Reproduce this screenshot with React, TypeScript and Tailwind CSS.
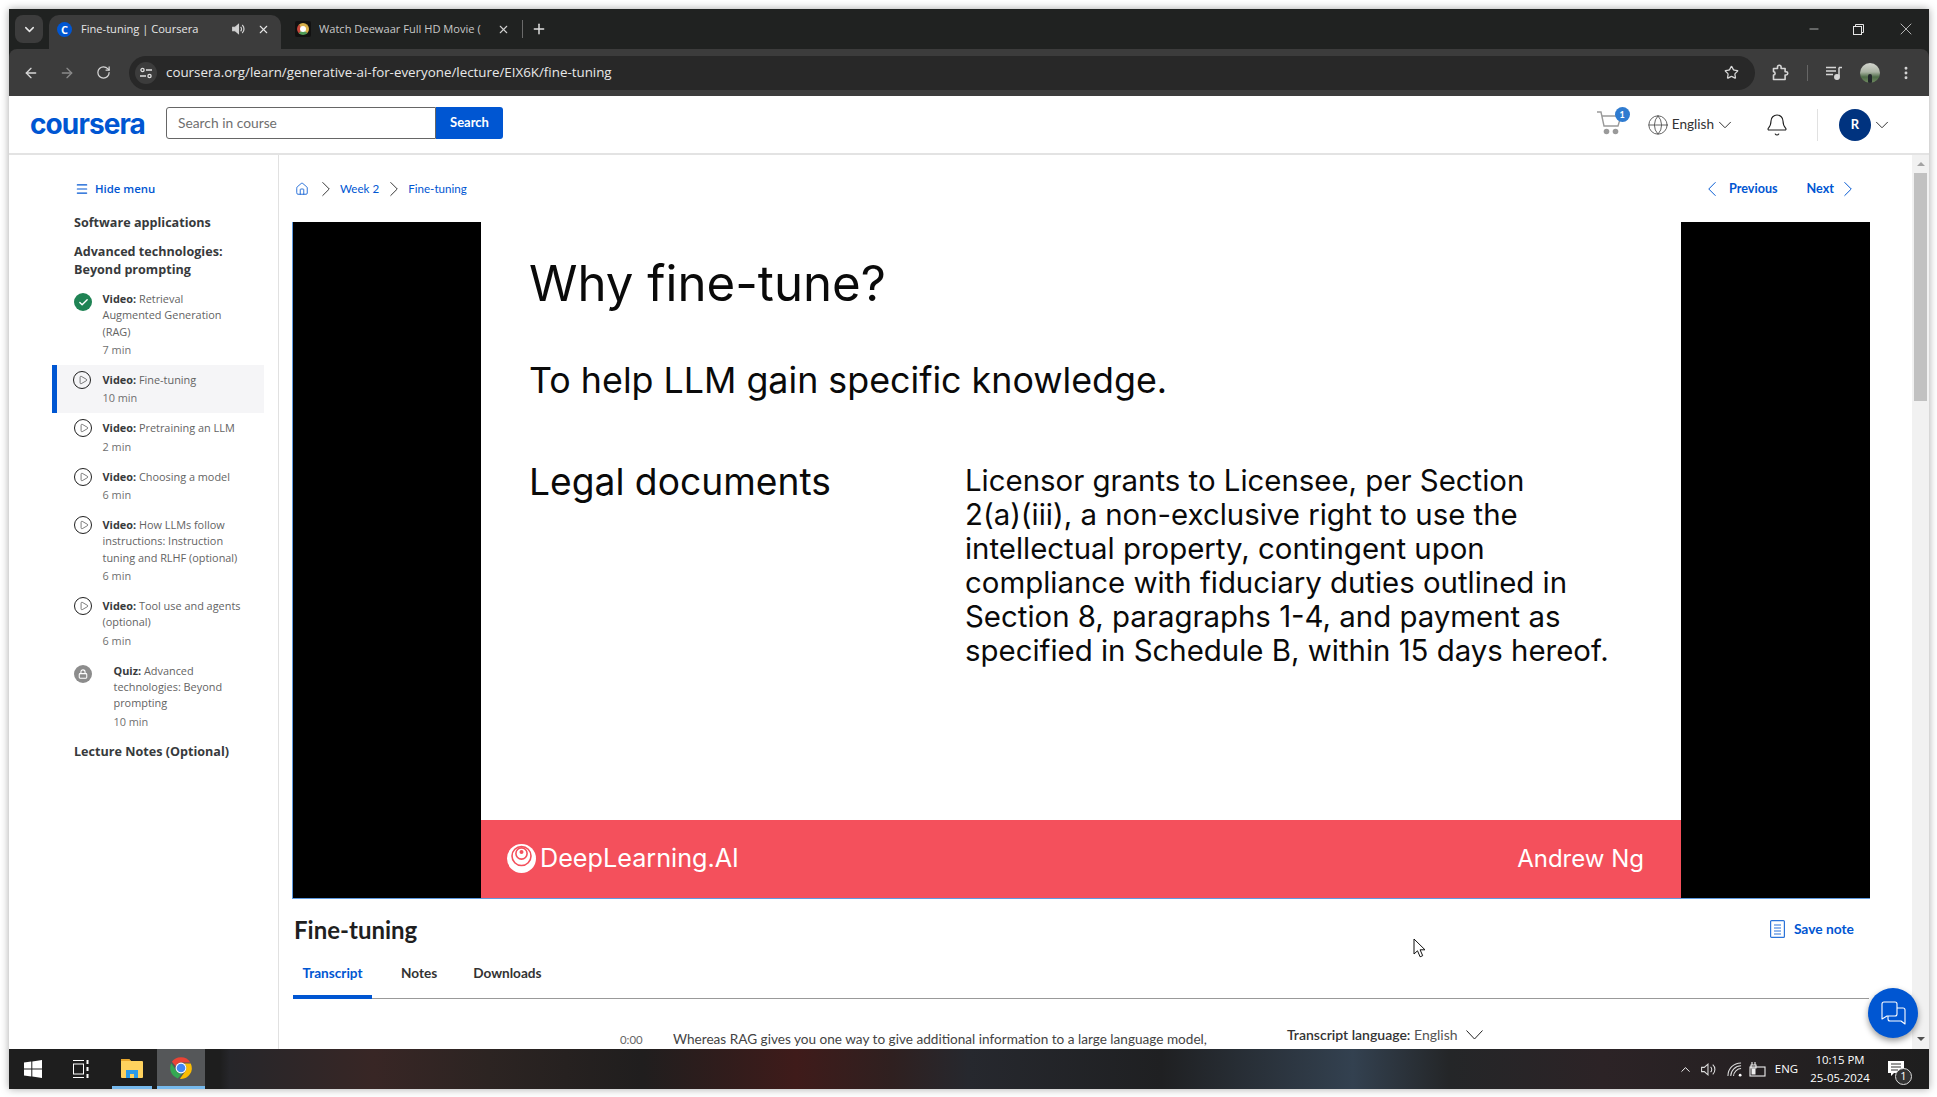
import React from "react";
import {
  ArrowLeft, ArrowRight, RotateCw, Star, X, Plus, ChevronDown, ChevronUp, ChevronLeft, ChevronRight,
  Menu, Globe, Bell, Home, EllipsisVertical, Minus, Check, Lock, Play,
} from "lucide-react";

const open = "font-['Open_Sans',sans-serif]";
const source = "font-['Lato',sans-serif]";
const chrome = "font-['Open_Sans',sans-serif]";

type Item = { kind: string; title: string; mins: string; icon: "done" | "play" | "lock"; active?: boolean };
const items: Item[] = [
  { kind: "Video:", title: " Retrieval Augmented Generation (RAG)", mins: "7 min", icon: "done" },
  { kind: "Video:", title: " Fine-tuning", mins: "10 min", icon: "play", active: true },
  { kind: "Video:", title: " Pretraining an LLM", mins: "2 min", icon: "play" },
  { kind: "Video:", title: " Choosing a model", mins: "6 min", icon: "play" },
  { kind: "Video:", title: " How LLMs follow instructions: Instruction tuning and RLHF (optional)", mins: "6 min", icon: "play" },
  { kind: "Video:", title: " Tool use and agents (optional)", mins: "6 min", icon: "play" },
  { kind: "Quiz:", title: " Advanced technologies: Beyond prompting", mins: "10 min", icon: "lock" },
];

function PlayIcon() {
  return (
    <span className="w-[18px] h-[18px] rounded-full border border-[#1f1f1f] flex items-center justify-center shrink-0 -mt-[1px]">
      <Play size={10} strokeWidth={1.4} className="text-[#1f1f1f] ml-[1px]" />
    </span>
  );
}

function SideItem({ item }: { item: Item }) {
  return (
    <div
      className={`flex w-[212px] py-[7px] border-l-[5px] ${
        item.active ? "border-[#0056d2] bg-[#f5f5f7] pl-[16px]" : "border-transparent pl-[17px]"
      }`}
    >
      {item.icon === "done" && (
        <span className="w-[18px] h-[18px] rounded-full bg-[#1f8354] flex items-center justify-center shrink-0 mt-[2px]">
          <Check size={11} strokeWidth={3} className="text-white" />
        </span>
      )}
      {item.icon === "play" && <PlayIcon />}
      {item.icon === "lock" && (
        <span className="w-[18px] h-[18px] rounded-full bg-[#8c8c8c] flex items-center justify-center shrink-0 mt-[2px]">
          <Lock size={10} strokeWidth={2.6} className="text-white" />
        </span>
      )}
      <div className={`${item.icon === "lock" ? "ml-[21.5px] w-[130px]" : item.active ? "ml-[11.5px] w-[140px]" : "ml-[10.5px] w-[140px]"}`}>
        <p className="text-[10.9px] leading-[16.33px] text-[#636363]">
          <span className="font-bold text-[#373a3c]">{item.kind}</span>
          {item.title}
        </p>
        <p className="text-[10.9px] leading-[16px] mt-[2px] text-[#6f6f6f]">{item.mins}</p>
      </div>
    </div>
  );
}

function Sidebar() {
  return (
    <aside className={`${open} w-[270px] shrink-0 border-r border-[#e1e1e1] pl-[43px] pt-[24px]`}>
      <div className="flex items-center h-5 pl-[23px] text-[#0056d2] text-[11.4px] font-semibold">
        <Menu size={14} strokeWidth={2} className="mr-[6px]" />
        Hide menu
      </div>
      <h3 className="pl-[22px] mt-[15px] text-[12.6px] leading-[18px] font-bold text-[#373a3c]">Software applications</h3>
      <h3 className="pl-[22px] mt-[11px] text-[12.6px] leading-[18px] font-bold text-[#373a3c] w-[190px]">
        Advanced technologies: Beyond prompting
      </h3>
      <div className="mt-[5px]">
        {items.map((it) => (
          <SideItem key={it.title} item={it} />
        ))}
      </div>
      <h3 className="pl-[22px] mt-[6px] text-[12.6px] leading-[18px] font-bold text-[#373a3c]">Lecture Notes (Optional)</h3>
    </aside>
  );
}

function ChromeLogo({ size = 30 }: { size?: number }) {
  return (
    <svg width={size} height={size} viewBox="0 0 48 48">
      <path d="M24 4a20 20 0 0 1 17.3 10H24a10 10 0 0 0-9.5 6.9L7.2 12.5A20 20 0 0 1 24 4z" fill="#ea4335" />
      <path d="M6 15.2 15.3 29a10 10 0 0 0 11.4 4.6L18 43.2A20 20 0 0 1 6 15.2z" fill="#34a853" />
      <path d="M42 15.5H29.5a10 10 0 0 1 2.8 14L22 44a20 20 0 0 0 20-28.5z" fill="#fbbc04" />
      <circle cx="24" cy="24" r="10" fill="#fff" />
      <circle cx="24" cy="24" r="8" fill="#4285f4" />
    </svg>
  );
}

function TabStrip() {
  return (
    <div className={`${chrome} h-[40px] bg-[#202221] flex text-[#e6e6e6] text-[11.1px] shrink-0`}>
      <div className="ml-[6px] mt-[6px] w-[28px] h-[28px] rounded-lg bg-[#3c3c3c] flex items-center justify-center">
        <ChevronDown size={15} strokeWidth={2.4} />
      </div>
      <div className="ml-[6px] mt-[6px] w-[232px] h-[34px] rounded-t-[10px] bg-[#3c3c3c] flex items-center pl-[8px] pr-[11px] pb-[6px]">
        <span className="w-[15px] h-[15px] rounded-full bg-[#0056d2] text-white text-[11px] font-bold flex items-center justify-center leading-none">C</span>
        <span className="ml-[9px] flex-1 whitespace-nowrap">Fine-tuning | Coursera</span>
        <svg width="14" height="14" viewBox="0 0 16 16" className="mr-[12px]" fill="none" stroke="#d0d0d0" strokeWidth="1.4">
          <path d="M2 6v4h3l3.5 3V3L5 6H2z" fill="#d0d0d0" />
          <path d="M11 5.5a3.5 3.5 0 0 1 0 5M12.8 3.5a6 6 0 0 1 0 9" />
        </svg>
        <X size={13} strokeWidth={2} />
      </div>
      <div className="w-[241px] h-[34px] mt-[6px] flex items-center pl-[14px] pr-[12px] pb-[6px]">
        <span className="w-[16px] h-[16px] rounded-[2px] bg-[#111] flex items-center justify-center shrink-0">
          <span className="w-[12px] h-[12px] rounded-full border-[3px] border-[#d8b04a] border-l-[#c7473a] border-b-[#4f9a55] bg-white" />
        </span>
        <span className="ml-[8px] w-[162px] overflow-hidden whitespace-nowrap text-[#c8c8c8]">Watch Deewaar Full HD Movie (</span>
        <X size={13} strokeWidth={2} className="ml-auto text-[#d0d0d0]" />
      </div>
      <div className="w-px h-[18px] bg-[#6a6a6a] mt-[11px]" />
      <Plus size={16} strokeWidth={2.2} className="ml-[8px] mt-[12px] text-[#e0e0e0]" />
      <div className="flex-1" />
      <div className="flex items-center h-[40px] mr-[13px] gap-[32px]">
        <Minus size={14} strokeWidth={1.2} />
        <svg width="11" height="11" viewBox="0 0 11 11" fill="none" stroke="#e6e6e6" strokeWidth="1">
          <rect x="0.5" y="2.5" width="8" height="8" />
          <path d="M2.5 2.5v-2h8v8h-2" />
        </svg>
        <X size={20} strokeWidth={0.9} />
      </div>
    </div>
  );
}

function Toolbar() {
  return (
    <div className="h-[47px] bg-[#3c3c3c] rounded-t-[8px] flex items-center shrink-0 text-[#d6d6d6]">
      <ArrowLeft size={16} strokeWidth={2} className="ml-[14px]" />
      <ArrowRight size={16} strokeWidth={2} className="ml-[20px] text-[#8a8a8a]" />
      <RotateCw size={15} strokeWidth={2} className="ml-[21px]" />
      <div className="ml-[18px] w-[1626px] h-[34px] rounded-full bg-[#282828] flex items-center pl-[6px] pr-[16px]">
        <span className="w-[22px] h-[22px] rounded-full bg-[#3c3c3c] flex items-center justify-center">
          <svg width="14" height="14" viewBox="0 0 14 14" fill="none" stroke="#e0e0e0" strokeWidth="1.3">
            <circle cx="3.5" cy="4" r="1.6" />
            <path d="M7 4h6M1 10h6" />
            <circle cx="10.5" cy="10" r="1.6" />
          </svg>
        </span>
        <span className={`${chrome} ml-[9px] text-[13.35px] text-[#e8e8e8]`}>coursera.org/learn/generative-ai-for-everyone/lecture/EIX6K/fine-tuning</span>
        <Star size={15} strokeWidth={2} className="ml-auto text-[#d8d8d8]" />
      </div>
      <svg width="17" height="17" viewBox="0 0 17 17" className="ml-[17px]" fill="none" stroke="#d6d6d6" strokeWidth="1.6">
        <path d="M1.5 4.5h4V3a1.8 1.8 0 0 1 3.6 0v1.5h4v3.2h1a1.6 1.6 0 0 1 0 3.3h-1v4.5h-11.6V11a1.6 1.6 0 0 0 0-3.2V4.5z" strokeLinejoin="round" />
      </svg>
      <div className="w-px h-[16px] bg-[#666] ml-[18px]" />
      <svg width="16" height="14" viewBox="0 0 16 14" className="ml-[18px]" fill="none" stroke="#d6d6d6" strokeWidth="1.5">
        <path d="M0 1.5h10M0 5h10M0 8.5h7" />
        <path d="M13 1.5v9" />
        <path d="M13 1.5h3" />
        <circle cx="11" cy="11" r="2.2" fill="#d6d6d6" />
      </svg>
      <span className="ml-[18px] w-[20px] h-[20px] rounded-full bg-[linear-gradient(180deg,#d4d6cf_0%,#aab3a3_45%,#4e6b47_70%,#6f8a60_100%)] flex items-end justify-center overflow-hidden">
        <span className="w-[4px] h-[9px] bg-[#23282b] rounded-t-sm" />
      </span>
      <EllipsisVertical size={16} strokeWidth={2.4} className="ml-[18px]" />
    </div>
  );
}

function Header() {
  return (
    <header className={`${source} h-[59px] bg-white border-b-2 border-[#e3e3e3] flex items-center shrink-0 pb-[3px]`}>
      <span className="ml-[21px] mt-[2px] w-[115px] font-['Inter',sans-serif] text-[28px] leading-none font-bold tracking-[-0.9px] text-[#0056d2]">coursera</span>
      <div className="ml-[21px] flex h-[32px]">
        <div className="w-[270px] border border-[#666] rounded-l-[3px] flex items-center pl-[11px] text-[13.8px] text-[#6f6f6f]">Search in course</div>
        <div className="w-[67px] rounded-r-[3px] bg-[#0056d2] text-white text-[13px] font-bold flex items-center justify-center">Search</div>
      </div>
      <div className="flex-1" />
      <div className="flex items-center mt-[3px]">
        <div className="relative w-[26px] h-[24px] -mt-[3px]">
          <svg width="26" height="24" viewBox="0 0 26 24" fill="none" stroke="#9a9a9a" strokeWidth="1.4">
            <path d="M0 1h4l3 14h14l3-10H5" />
            <circle cx="9.5" cy="20.5" r="2.8" fill="#9a9a9a" stroke="none" />
            <circle cx="18.5" cy="20.5" r="2.8" fill="#9a9a9a" stroke="none" />
          </svg>
          <span className="absolute -top-[4px] -right-[7px] w-[15px] h-[15px] rounded-full bg-[#2f7bd0] text-white text-[9px] font-bold flex items-center justify-center">1</span>
        </div>
        <Globe size={22} strokeWidth={1} className="ml-[24px] text-[#555]" />
        <span className="ml-[3px] text-[13.6px] text-[#333]">English</span>
        <ChevronDown size={22} strokeWidth={1} className="text-[#222]" />
        <Bell size={24} strokeWidth={1.1} className="ml-[29px] text-[#1f1f1f]" />
        <div className="w-px h-[32px] bg-[#e1e1e1] ml-[28px]" />
        <span className="ml-[21px] w-[32px] h-[32px] rounded-full bg-[#00337f] text-white text-[13px] font-bold flex items-center justify-center">R</span>
        <ChevronDown size={22} strokeWidth={1} className="mr-[36px] text-[#222]" />
      </div>
    </header>
  );
}

function Slide() {
  return (
    <div className="h-[677px] -mx-[1px] border-l border-b border-[#5f9be0] bg-black flex pr-px">
      <div className="w-[188px] shrink-0" />
      <div className="flex-1 bg-white flex flex-col font-['Inter',sans-serif] text-[#0a0a0a]">
        <div className="flex-1 pl-[48px] pt-[31px]">
          <h1 className="text-[49.2px] leading-[60px]">Why fine-tune?</h1>
          <p className="text-[35.8px] leading-[44px] mt-[45px]">To help LLM gain specific knowledge.</p>
          <div className="flex mt-[60px]">
            <p className="text-[37.2px] leading-[40px] w-[436px] shrink-0">Legal documents</p>
            <div className="text-[29.4px] leading-[34px] mt-[2px] whitespace-nowrap">
              <div>Licensor grants to Licensee, per Section</div>
              <div>2(a)(iii), a non-exclusive right to use the</div>
              <div>intellectual property, contingent upon</div>
              <div>compliance with fiduciary duties outlined in</div>
              <div>Section 8, paragraphs 1-4, and payment as</div>
              <div>specified in Schedule B, within 15 days hereof.</div>
            </div>
          </div>
        </div>
        <div className="h-[78px] bg-[#f4505c] flex items-center justify-between pl-[26px] pr-[37px] text-white">
          <div className="flex items-center">
            <svg width="29" height="29" viewBox="0 0 29 29" fill="none">
              <circle cx="14.5" cy="14.5" r="14.5" fill="#fff" />
              <circle cx="14.5" cy="12" r="9.5" fill="none" stroke="#f4505c" strokeWidth="1.6" />
              <circle cx="14.5" cy="9.5" r="5.6" fill="none" stroke="#f4505c" strokeWidth="1.6" />
              <circle cx="14.5" cy="8" r="2" fill="#f4505c" />
            </svg>
            <span className="ml-[4px] text-[25.2px]">DeepLearning.AI</span>
          </div>
          <span className="text-[24px]">Andrew Ng</span>
        </div>
      </div>
      <div className="w-[188px] shrink-0" />
    </div>
  );
}

function Content() {
  return (
    <main className={`${source} flex-1 min-w-0 overflow-hidden pl-[14px] pr-[43px] pt-[24px]`}>
      <div className="flex items-center h-5 text-[11.6px] text-[#0056d2]">
        <Home size={14} strokeWidth={1.4} className="ml-[2px]" />
        <ChevronRight size={26} strokeWidth={0.9} className="ml-[4px] text-[#333]" />
        <span className="ml-[1px]">Week 2</span>
        <ChevronRight size={26} strokeWidth={0.9} className="ml-[2px] text-[#333]" />
        <span className="ml-[1px]">Fine-tuning</span>
        <div className="flex-1" />
        <ChevronLeft size={26} strokeWidth={0.9} />
        <span className="ml-[4px] font-bold text-[12.6px]">Previous</span>
        <span className="ml-[29px] font-bold text-[12.6px]">Next</span>
        <ChevronRight size={26} strokeWidth={0.9} className="ml-[1px] mr-[8px]" />
      </div>
      <div className="mt-[23px]">
        <Slide />
      </div>
      <div className="flex items-center justify-between h-8 mt-[15px] pl-[1px] pr-[15px]">
        <h2 className="text-[24px] font-bold text-[#1f1f1f]">Fine-tuning</h2>
        <div className="flex items-center text-[#0056d2] text-[13.8px] font-bold -mt-[2px]">
          <svg width="15" height="18" viewBox="0 0 15 18" fill="none" stroke="#2a73d9" strokeWidth="1.2">
            <rect x="0.6" y="0.6" width="13.8" height="16.8" rx="1" />
            <path d="M4 5h7M4 8h7M4 11h7M4 14h7" />
          </svg>
          <span className="ml-[9px]">Save note</span>
        </div>
      </div>
      <div className="flex h-[44px] mt-[9px] border-b border-[#999] text-[13.6px] font-bold">
        <div className="w-[79px] h-[44px] border-b-4 border-[#0056d2] text-[#0056d2] flex items-center justify-center pb-[3px]">Transcript</div>
        <div className="ml-[29px] h-[44px] flex items-center pb-[7px] text-[#333]">Notes</div>
        <div className="ml-[36px] h-[44px] flex items-center pb-[7px] text-[#333]">Downloads</div>
      </div>
      <div className="flex items-start mt-[27px] h-[30px] text-[13.6px]">
        <span className="ml-[327px] mt-[5px] w-[53px] text-[11.4px] text-[#666]">0:00</span>
        <span className="mt-[3px] w-[534px] whitespace-nowrap text-[#444]">Whereas RAG gives you one way to give additional information to a large language model,</span>
        <span className="ml-[80px] -mt-[2px] text-[14px] text-[#333] whitespace-nowrap">
          <b className="font-semibold">Transcript language:</b> <span className="text-[#555]">English</span>
        </span>
        <svg width="17" height="10" viewBox="0 0 17 10" fill="none" stroke="#222" strokeWidth="1" className="ml-[8px] mt-[4px]">
          <path d="M0.5 0.5 8.5 9 16.5 0.5" />
        </svg>
      </div>
    </main>
  );
}

function Scrollbar() {
  return (
    <div className="w-[17px] shrink-0 bg-[#f1f1f1] flex flex-col items-center">
      <div className="h-[17px] flex items-center justify-center">
        <span className="w-0 h-0 border-x-[4px] border-x-transparent border-b-[4px] border-b-[#a3a3a3]" />
      </div>
      <div className="w-[13px] h-[228px] bg-[#c1c1c1] mt-[1px]" />
      <div className="flex-1" />
      <div className="h-[20px] flex items-center justify-center">
        <span className="w-0 h-0 border-x-[4px] border-x-transparent border-t-[4px] border-t-[#505050]" />
      </div>
    </div>
  );
}

function Taskbar() {
  return (
    <footer
      className={`${chrome} h-[40px] shrink-0 flex items-center text-white bg-[linear-gradient(90deg,#1e1e1e_0%,#1e1e1e_11%,#26262a_11.5%,#382625_19%,#2c2422_25%,#201e1e_33%,#3f1b1a_41%,#2f2020_46%,#26282e_50%,#1f2022_60%,#334150_70%,#242628_75%,#2c2326_83%,#1e1e1e_100%)]`}
    >
      <svg width="18" height="18" viewBox="0 0 18 18" fill="#fff" className="ml-[15px]">
        <path d="M0 2.6 7.3 1.5v7H0zM8.3 1.4 18 0v8.5H8.3zM0 9.5h7.3v7L0 15.4zM8.3 9.5H18V18l-9.7-1.4z" />
      </svg>
      <svg width="16" height="18" viewBox="0 0 16 18" fill="none" stroke="#fff" strokeWidth="1" className="ml-[31px]">
        <path d="M0 .5h11M0 17.5h11" />
        <rect x="0.5" y="4" width="10" height="10" />
        <path d="M14.5 0v4M14.5 7v4M14.5 14v4" strokeWidth="2" />
      </svg>
      <div className="ml-[23px] w-[40px] h-[40px] border-b-[3px] border-[#76b9ed] flex items-center justify-center">
        <svg width="22" height="22" viewBox="0 0 22 22">
          <path d="M0 3a1 1 0 0 1 1-1h7l2 2h11a1 1 0 0 1 1 1v15a1 1 0 0 1-1 1H1a1 1 0 0 1-1-1z" fill="#ffd25e" />
          <path d="M0 3a1 1 0 0 1 1-1h7l2 2H0z" fill="#e8a62c" />
          <path d="M5 21v-8h12v8h-4v-4H9v4z" fill="#2d9be8" />
        </svg>
      </div>
      <div className="ml-[5px] w-[48px] h-[40px] bg-[#555759] border-b-[3px] border-[#76b9ed] flex items-center justify-center">
        <ChromeLogo size={26} />
      </div>
      <div className="flex-1" />
      <ChevronUp size={15} strokeWidth={1.5} />
      <svg width="17" height="17" viewBox="0 0 16 16" fill="none" stroke="#ddd" strokeWidth="1" className="ml-[7px]">
        <path d="M1.5 6v4h2.5l3.5 3V3L4 6H1.5z" />
        <path d="M10 5.5a3.5 3.5 0 0 1 0 5M12 3.5a6 6 0 0 1 0 9" />
      </svg>
      <svg width="15" height="15" viewBox="0 0 16 16" fill="none" stroke="#ddd" strokeWidth="1.1" className="ml-[10px]">
        <path d="M1 15C1 7 7 1 15 1M4 15C4 9 9 4 15 4M7 15C7 11 11 7 15 7" />
        <circle cx="14" cy="14" r="1.5" fill="#fff" stroke="none" />
      </svg>
      <svg width="17" height="15" viewBox="0 0 17 15" fill="none" stroke="#eee" strokeWidth="1.1" className="ml-[7px]">
        <rect x="1" y="5" width="15" height="9" fill="none" />
        <rect x="2.5" y="6.5" width="4" height="6" fill="#eee" stroke="none" />
        <path d="M3 0v3M6 0v3M2 3h5v3H2z" />
      </svg>
      <span className="ml-[9px] text-[11.4px]">ENG</span>
      <div className="ml-[12px] w-[60px] text-center text-[11.4px] leading-[18px] whitespace-nowrap">
        <div>10:15 PM</div>
        <div>25-05-2024</div>
      </div>
      <div className="relative ml-[18px] mr-[25px] w-[16px] h-[16px]">
        <svg width="16" height="16" viewBox="0 0 16 16" fill="#fff">
          <path d="M0 0h16v12H6l-3 3v-3H0z" />
          <path d="M3 3h10M3 6h10M3 9h7" stroke="#333" strokeWidth="1" />
        </svg>
        <span className="absolute -right-[8px] -bottom-[8px] w-[17px] h-[17px] rounded-full border border-[#ddd] bg-[#333] text-[11px] flex items-center justify-center">1</span>
      </div>
    </footer>
  );
}

export default function App() {
  return (
    <div className="w-[1937px] h-[1097px] overflow-hidden bg-white pt-[9px] pl-[9px] pr-[8px] pb-[8px]">
      <div className="h-full flex flex-col bg-[#202221] shadow-[0_0_8px_rgba(0,0,0,0.35)]">
        <TabStrip />
        <Toolbar />
        <Header />
        <div className="relative flex-1 min-h-0 flex bg-white overflow-hidden">
          <Sidebar />
          <Content />
          <Scrollbar />
          <div className="absolute right-[11px] bottom-[11px] w-[50px] h-[50px] rounded-full bg-[#0056d2] shadow-[0_3px_6px_rgba(0,0,0,0.4)] flex items-center justify-center">
            <svg width="26" height="26" viewBox="0 0 26 26" fill="none" stroke="#fff" strokeWidth="1.1" strokeLinejoin="round">
              <path d="M2 4a2 2 0 0 1 2-2h11a2 2 0 0 1 2 2v10a2 2 0 0 1-2 2H7l-5 3z" />
              <path d="M17 8h6a2 2 0 0 1 2 2v14l-4-3H10a2 2 0 0 1-2-2v-3" />
            </svg>
          </div>
          <svg width="13" height="20" viewBox="0 0 13 20" className="absolute left-[1404px] top-[783px]" fill="#fff" stroke="#111" strokeWidth="1">
            <path d="M1 1v15l3.5-3.2 2.6 6 2.6-1.1-2.6-5.9H12z" />
          </svg>
        </div>
        <Taskbar />
      </div>
    </div>
  );
}
